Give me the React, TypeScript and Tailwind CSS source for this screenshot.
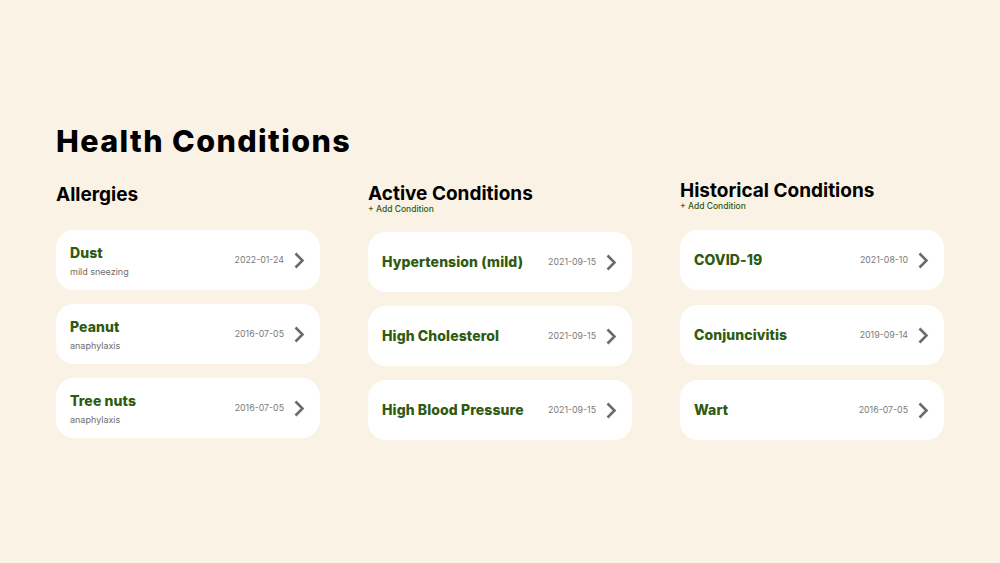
import React from "react";

type Item = { title: string; sub?: string; date: string };

const allergies: Item[] = [
  { title: "Dust", sub: "mild sneezing", date: "2022-01-24" },
  { title: "Peanut", sub: "anaphylaxis", date: "2016-07-05" },
  { title: "Tree nuts", sub: "anaphylaxis", date: "2016-07-05" },
];
const active: Item[] = [
  { title: "Hypertension (mild)", date: "2021-09-15" },
  { title: "High Cholesterol", date: "2021-09-15" },
  { title: "High Blood Pressure", date: "2021-09-15" },
];
const historical: Item[] = [
  { title: "COVID-19", date: "2021-08-10" },
  { title: "Conjuncivitis", date: "2019-09-14" },
  { title: "Wart", date: "2016-07-05" },
];

function Chevron() {
  return (
    <svg width="12" height="17" viewBox="0 0 12 17" fill="none">
      <polyline points="2.5,1.5 9.5,8.5 2.5,15.5" stroke="#6b6b6b" strokeWidth="2.6" strokeLinejoin="miter" />
    </svg>
  );
}

function Card({ item }: { item: Item }) {
  return (
    <div className="flex h-[60px] items-center justify-between rounded-[18px] bg-white pl-[14px] pr-[15px]">
      <div className="flex flex-col">
        <div className="text-[14px] font-extrabold leading-[20px] tracking-[0.1px] text-[#2f5a10]">{item.title}</div>
        {item.sub && (
          <div className="mt-[3px] text-[9px] leading-[12px] text-[#6e6e6e]">{item.sub}</div>
        )}
      </div>
      <div className="flex items-center gap-[9px]">
        <span className="text-[8.8px] text-[#7a7a7a]">{item.date}</span>
        <Chevron />
      </div>
    </div>
  );
}

function Cards({ items, gap }: { items: Item[]; gap: string }) {
  return (
    <div className={`flex flex-col ${gap}`}>
      {items.map((i) => (
        <Card key={i.title} item={i} />
      ))}
    </div>
  );
}

export default function App() {
  return (
    <div
      className="h-[563px] w-[1000px] bg-[#fbf2e6] px-[56px] pt-[120px] text-black"
      style={{ fontFamily: "Inter, 'Noto Sans', sans-serif" }}
    >
      <h1 className="text-[30.5px] font-extrabold leading-[42px] tracking-[1.4px]">Health Conditions</h1>
      <div className="mt-[16px] grid grid-cols-3 gap-[48px]">
        <div className="flex flex-col">
          <h2 className="mt-[4px] text-[19px] font-bold leading-[26px]">Allergies</h2>
          <div className="mt-[22px]">
            <Cards items={allergies} gap="gap-[14px]" />
          </div>
        </div>
        <div className="flex flex-col">
          <h2 className="mt-[3px] text-[19px] font-bold leading-[26px]">Active Conditions</h2>
          <div className="-mt-[3px] text-[8.5px] font-medium leading-[10px] text-[#2f5a10]">+ Add Condition</div>
          <div className="mt-[18px]">
            <Cards items={active} gap="gap-[14px]" />
          </div>
        </div>
        <div className="flex flex-col">
          <h2 className="text-[19px] font-bold leading-[26px]">Historical Conditions</h2>
          <div className="-mt-[3px] text-[8.5px] font-medium leading-[10px] text-[#2f5a10]">+ Add Condition</div>
          <div className="mt-[19px]">
            <Cards items={historical} gap="gap-[15px]" />
          </div>
        </div>
      </div>
    </div>
  );
}
